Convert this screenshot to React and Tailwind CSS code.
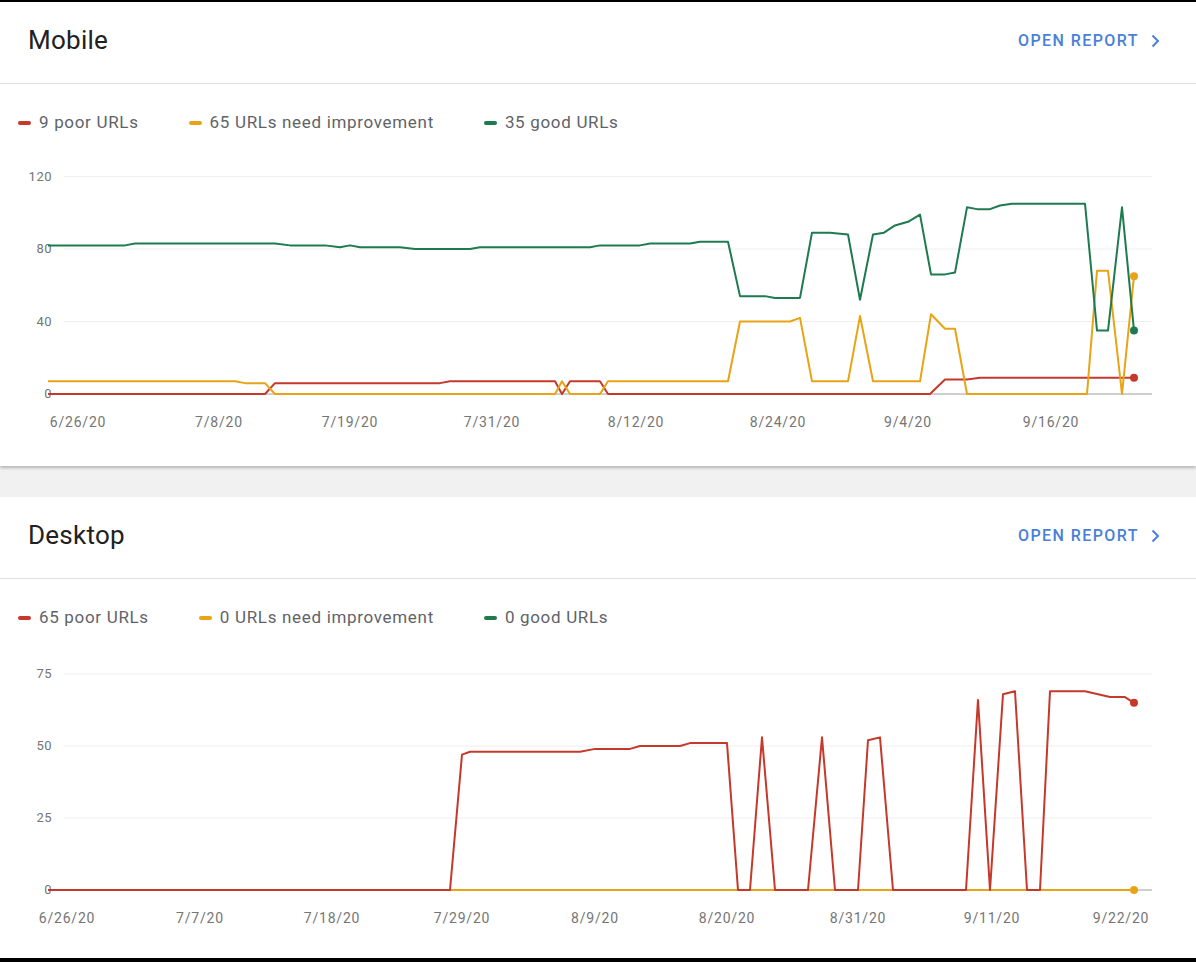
import React from "react";

const mG=[[48,82],[125,82],[135,83],[275,83],[290,82],[325,82],[340,81],[350,82],[360,81],[400,81],[415,80],[470,80],[480,81],[590,81],[600,82],[640,82],[650,83],[690,83],[700,84],[728,84],[740,54],[765,54],[775,53],[800,53],[812,89],[830,89],[848,88],[860,52],[873,88],[884,89],[895,93],[908,95],[920,99],[931,66],[945,66],[955,67],[967,103],[977,102],[990,102],[1000,104],[1012,105],[1085,105],[1097,35],[1108,35],[1122,103],[1134,35]];
const mO=[[48,7],[235,7],[245,6],[265,6],[275,0],[555,0],[562,7],[570,0],[600,0],[608,7],[728,7],[740,40],[790,40],[800,42],[812,7],[848,7],[860,43],[873,7],[920,7],[931,44],[945,36],[955,36],[967,0],[1087,0],[1097,68],[1108,68],[1122,0],[1134,65]];
const mR=[[48,0],[265,0],[275,6],[440,6],[450,7],[555,7],[562,0],[570,7],[600,7],[608,0],[930,0],[945,8],[967,8],[980,9],[1134,9]];
const dR=[[48,0],[450,0],[462,47],[470,48],[580,48],[595,49],[630,49],[640,50],[680,50],[690,51],[727,51],[738,0],[750,0],[762,53],[775,0],[808,0],[822,53],[835,0],[858,0],[868,52],[880,53],[893,0],[966,0],[978,66],[990,0],[1003,68],[1015,69],[1027,0],[1040,0],[1050,69],[1085,69],[1110,67],[1125,67],[1134,65]];
const dO=[[48,0],[1134,0]];

const RED="#c5392b", ORA="#e8a317", GRN="#1e7a4f";

function Chart({ off, height, zeroY, scale, ticks, xlabels, series }) {
  const Y = (v) => zeroY - off - v * scale;
  return (
    <svg width="1196" height={height} className="block">
      {ticks.map((t) => (
        <g key={t}>
          <line x1="64" x2="1152" y1={Y(t)} y2={Y(t)} stroke={t === 0 ? "#9e9e9e" : "#eeeeee"} strokeWidth="1" />
          <text x="52" y={Y(t) + 4} textAnchor="end" fontSize="13" letterSpacing="0.5" fill="#757575" fontFamily="Roboto, sans-serif">{t}</text>
        </g>
      ))}
      {xlabels.map(([l, x]) => (
        <text key={l} x={x} y={zeroY - off + 33} textAnchor="middle" fontSize="14" letterSpacing="0.8" fill="#757575" fontFamily="Roboto, sans-serif">{l}</text>
      ))}
      {series.map(([pts, c], i) => (
        <g key={i}>
          <polyline points={pts.map(([x, v]) => `${x},${Y(v)}`).join(" ")} fill="none" stroke={c} strokeWidth="2" strokeLinejoin="round" />
          <circle cx={pts[pts.length - 1][0]} cy={Y(pts[pts.length - 1][1])} r="4" fill={c} />
        </g>
      ))}
    </svg>
  );
}

function Header({ title }) {
  return (
    <div className="h-[82px] flex items-center justify-between pl-7 pr-9 pb-1 border-b border-[#e0e0e0]">
      <span className="text-[26px] text-[#212121] tracking-[0.01em]">{title}</span>
      <span className="flex items-center gap-3 text-[16px] font-medium tracking-[0.09em] text-[#4a80d8]">
        OPEN REPORT
        <svg width="9" height="14" viewBox="0 0 9 14"><path d="M1.5 1.5 7 7l-5.5 5.5" fill="none" stroke="#4a80d8" strokeWidth="2" /></svg>
      </span>
    </div>
  );
}

function Legend({ items }) {
  return (
    <div className="h-[72px] flex items-center pl-[18px] pt-[6px] gap-[50px] text-[17px] tracking-[0.04em] text-[#5f6368]">
      {items.map(([t, c]) => (
        <div key={t} className="flex items-center gap-2">
          <span className="w-[13px] h-[4px] rounded-sm" style={{ background: c }} />
          {t}
        </div>
      ))}
    </div>
  );
}

export default function App() {
  return (
    <div className="w-[1196px] h-[962px] bg-[#f1f1f1] border-t-2 border-b-4 border-black overflow-hidden" style={{ fontFamily: "Roboto, 'Liberation Sans', sans-serif" }}>
      <div className="bg-white h-[464px] shadow-[0_2px_3px_rgba(0,0,0,0.25)]">
        <Header title="Mobile" />
        <Legend items={[["9 poor URLs", RED], ["65 URLs need improvement", ORA], ["35 good URLs", GRN]]} />
        <Chart off={156} height={308} zeroY={394} scale={1.8125} ticks={[0, 40, 80, 120]}
          xlabels={[["6/26/20",78],["7/8/20",219],["7/19/20",350],["7/31/20",492],["8/12/20",636],["8/24/20",778],["9/4/20",908],["9/16/20",1051]]}
          series={[[mR, RED], [mO, ORA], [mG, GRN]]} />
      </div>
      <div className="h-[31px]" />
      <div className="bg-white h-[461px]">
        <Header title="Desktop" />
        <Legend items={[["65 poor URLs", RED], ["0 URLs need improvement", ORA], ["0 good URLs", GRN]]} />
        <Chart off={652} height={306} zeroY={891} scale={2.88} ticks={[0, 25, 50, 75]}
          xlabels={[["6/26/20",67],["7/7/20",200],["7/18/20",332],["7/29/20",462],["8/9/20",595],["8/20/20",727],["8/31/20",858],["9/11/20",992],["9/22/20",1121]]}
          series={[[dO, ORA], [dR, RED]]} />
      </div>
    </div>
  );
}
